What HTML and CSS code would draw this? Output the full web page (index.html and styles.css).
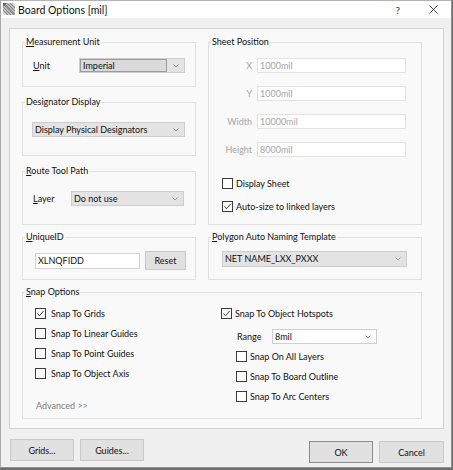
FILE: index.html
```html
<!DOCTYPE html>
<html>
<head>
<meta charset="utf-8">
<title>Board Options [mil]</title>
<link rel="stylesheet" href="styles.css">
</head>
<body>
<div class="window">
  <div class="titlebar">
    <svg class="app-icon" width="12" height="12" viewBox="0 0 12 12">
      <rect x="0" y="0" width="12" height="12" fill="#d8d8d8"/>
      <path d="M0 1 L11 12 M0 4 L8 12 M0 7 L5 12 M1 0 L12 11 M4 0 L12 8 M7 0 L12 5" stroke="#8a8a8a" stroke-width="1.2"/>
      <path d="M0 0 L4 0 L0 4 Z" fill="#6a6a6a"/>
    </svg>
    <span class="title">Board Options [mil]</span>
    <span class="help">?</span>
    <svg class="close" width="9" height="9" viewBox="0 0 9 9">
      <path d="M0.5 0.5 L8.5 8.5 M8.5 0.5 L0.5 8.5" stroke="#333" stroke-width="0.9"/>
    </svg>
  </div>

  <div class="body">
    <div class="panel">
      <div class="grid">
        <div class="col-left">
          <fieldset class="group g-unit">
            <legend><u>M</u>easurement Unit</legend>
            <div class="fs-body row">
              <span class="lbl lbl-unit"><u>U</u>nit</span>
              <div class="select focused w-unit">
                <span class="value">Imperial</span>
                <span class="arrow"><svg width="6" height="4" viewBox="0 0 6 4"><polyline points="0.5,0.5 3,3 5.5,0.5" fill="none" stroke="#888" stroke-width="0.8"/></svg></span>
              </div>
            </div>
          </fieldset>

          <fieldset class="group g-des">
            <legend>Designator Display</legend>
            <div class="fs-body row pad-des">
              <div class="select w-des">
                <span class="value">Display Physical Designators</span>
                <span class="arrow"><svg width="6" height="4" viewBox="0 0 6 4"><polyline points="0.5,0.5 3,3 5.5,0.5" fill="none" stroke="#888" stroke-width="0.8"/></svg></span>
              </div>
            </div>
          </fieldset>

          <fieldset class="group g-route">
            <legend><u>R</u>oute Tool Path</legend>
            <div class="fs-body row pad-route">
              <span class="lbl lbl-layer"><u>L</u>ayer</span>
              <div class="select w-layer">
                <span class="value">Do not use</span>
                <span class="arrow"><svg width="6" height="4" viewBox="0 0 6 4"><polyline points="0.5,0.5 3,3 5.5,0.5" fill="none" stroke="#888" stroke-width="0.8"/></svg></span>
              </div>
            </div>
          </fieldset>
        </div>

        <fieldset class="group g-sheet">
          <legend>Sheet Position</legend>
          <div class="fs-body sheet-body">
            <div class="srow"><span class="slbl">X</span><span class="input disabled w-sheet">1000mil</span></div>
            <div class="srow"><span class="slbl">Y</span><span class="input disabled w-sheet">1000mil</span></div>
            <div class="srow"><span class="slbl">Width</span><span class="input disabled w-sheet">10000mil</span></div>
            <div class="srow"><span class="slbl">Height</span><span class="input disabled w-sheet">8000mil</span></div>
            <div class="checks sheet-checks">
              <div class="check tight"><span class="box"></span><span>Display Sheet</span></div>
              <div class="check tight"><span class="box"><svg width="9" height="9" viewBox="0 0 9 9"><polyline points="1.5,4.5 3.5,6.8 7.8,1.8" fill="none" stroke="#222" stroke-width="0.9"/></svg></span><span>Auto-size to linked layers</span></div>
            </div>
          </div>
        </fieldset>

        <fieldset class="group g-uid">
          <legend><u>U</u>niqueID</legend>
          <div class="fs-body row pad-uid">
            <span class="input w-uid">XLNQFIDD</span>
            <span class="btn btn-reset">Reset</span>
          </div>
        </fieldset>

        <fieldset class="group g-poly">
          <legend><u>P</u>olygon Auto Naming Template</legend>
          <div class="fs-body row pad-poly">
            <div class="select w-poly">
              <span class="value">NET NAME_LXX_PXXX</span>
              <span class="arrow"><svg width="6" height="4" viewBox="0 0 6 4"><polyline points="0.5,0.5 3,3 5.5,0.5" fill="none" stroke="#888" stroke-width="0.8"/></svg></span>
            </div>
          </div>
        </fieldset>

        <fieldset class="group g-snap">
          <legend><u>S</u>nap Options</legend>
          <div class="fs-body snap-body">
            <div class="snap-left">
              <div class="check wide"><span class="box"><svg width="9" height="9" viewBox="0 0 9 9"><polyline points="1.5,4.5 3.5,6.8 7.8,1.8" fill="none" stroke="#222" stroke-width="0.9"/></svg></span><span>Snap To Grids</span></div>
              <div class="check wide"><span class="box"></span><span>Snap To Linear Guides</span></div>
              <div class="check wide"><span class="box"></span><span>Snap To Point Guides</span></div>
              <div class="check wide"><span class="box"></span><span>Snap To Object Axis</span></div>
              <div class="advanced">Advanced &gt;&gt;</div>
            </div>
            <div class="snap-right">
              <div class="check tight"><span class="box"><svg width="9" height="9" viewBox="0 0 9 9"><polyline points="1.5,4.5 3.5,6.8 7.8,1.8" fill="none" stroke="#222" stroke-width="0.9"/></svg></span><span>Snap To Object Hotspots</span></div>
              <div class="row range-row">
                <span class="lbl lbl-range">Range</span>
                <div class="select white w-range">
                  <span class="value">8mil</span>
                  <span class="arrow"><svg width="6" height="4" viewBox="0 0 6 4"><polyline points="0.5,0.5 3,3 5.5,0.5" fill="none" stroke="#888" stroke-width="0.8"/></svg></span>
                </div>
              </div>
              <div class="sub-checks">
                <div class="check tight"><span class="box"></span><span>Snap On All Layers</span></div>
                <div class="check tight"><span class="box"></span><span>Snap To Board Outline</span></div>
                <div class="check tight"><span class="box"></span><span>Snap To Arc Centers</span></div>
              </div>
            </div>
          </div>
        </fieldset>
      </div>
    </div>

    <div class="footer">
      <div class="btn-group">
        <span class="btn btn-foot">Grids...</span>
        <span class="btn btn-foot">Guides...</span>
      </div>
      <div class="btn-group right">
        <span class="btn btn-foot default">OK</span>
        <span class="btn btn-foot btn-cancel">Cancel</span>
      </div>
    </div>
  </div>
</div>
</body>
</html>
```

FILE: styles.css
```css
* { box-sizing: border-box; }
html, body { margin: 0; padding: 0; }
body {
  width: 453px;
  height: 470px;
  overflow: hidden;
  background: #6e6e6e;
  font-family: Lato, "Noto Sans", sans-serif;
  font-size: 9px;
  color: #111;
}
u { text-decoration: underline; text-underline-offset: 1px; }

.window {
  width: 452px;
  height: 468px;
  background: #f0f0f0;
  border: 1px solid #8f8f8f;
  border-top-color: #b4b4b4;
  border-left-color: #a8a8a8;
  display: flex;
  flex-direction: column;
}

.titlebar {
  height: 17px;
  background: #ffffff;
  display: flex;
  align-items: center;
  padding-left: 2px;
  flex: none;
}
.app-icon { flex: none; margin-top: -1px; }
.title { font-size: 10.5px; margin-left: 3px; color: #111; line-height: 14px; }
.help { margin-left: auto; font-size: 10px; color: #333; margin-right: 29px; }
.close { margin-right: 13px; }

.body { flex: 1; display: flex; flex-direction: column; }

.panel {
  margin: 10px 7px 0 8px;
  height: 401px;
  background: #f9f9f9;
  border: 1px solid #d2d2d2;
  padding: 7px 0 0 12px;
}

.grid {
  display: grid;
  grid-template-columns: 174px 214px;
  column-gap: 12px;
  row-gap: 6px;
}
.col-left { display: flex; flex-direction: column; gap: 9px; }

.group {
  margin: 0;
  padding: 0;
  min-width: 0;
  border: 1px solid #e0e0e0;
}
.group legend {
  padding: 0 1px;
  margin-left: 2px;
  line-height: 12px;
  font-size: 9px;
  color: #111;
}
.g-unit { height: 51px; }
.g-des { height: 60px; }
.g-route { height: 60px; }
.g-sheet { height: 189px; }
.g-uid { height: 49px; }
.g-poly { height: 49px; }
.g-snap { grid-column: 1 / span 2; height: 133px; }

.fs-body { padding: 10px 0 0 10px; }
.row { display: flex; align-items: center; }
.pad-des { padding: 14px 0 0 9px; }
.pad-route { padding: 14px 0 0 10px; }
.pad-uid { padding: 8px 0 0 12px; gap: 5px; }
.pad-poly { padding: 8px 0 0 13px; }

.lbl { line-height: 12px; }
.lbl-unit { width: 46px; }
.lbl-layer { width: 38px; }
.lbl-range { width: 35px; }

.select {
  height: 15px;
  background: #e3e3e3;
  border: 1px solid #cdcdcd;
  display: flex;
  align-items: stretch;
}
.select .value {
  flex: 1;
  padding-left: 2px;
  line-height: 13px;
  white-space: nowrap;
  overflow: hidden;
}
.select .arrow {
  width: 17px;
  display: flex;
  align-items: center;
  justify-content: center;
}
.select.focused .value {
  background: #dadada;
  border: 1px solid #9c9c9c;
  margin: 0;
  line-height: 11px;
}
.select.white { background: #ffffff; border-color: #cfcfcf; }

.w-unit { width: 106px; }
.w-des { width: 153px; }
.w-layer { width: 113px; }
.w-poly { width: 185px; height: 16px; }
.w-poly .value { line-height: 14px; }
.w-range { width: 105px; }

.input {
  display: block;
  height: 15px;
  background: #ffffff;
  border: 1px solid #d4d4d4;
  padding-left: 2px;
  line-height: 13px;
}
.input.disabled { color: #a6a6a6; border-color: #e2e2e2; }
.w-uid { width: 105px; height: 16px; line-height: 14px; }
.w-sheet { width: 149px; }

.btn {
  display: flex;
  align-items: center;
  justify-content: center;
  background: #e1e1e1;
  border: 1px solid #c9c9c9;
  color: #111;
}
.btn-reset { width: 41px; height: 19px; }

.sheet-body { padding: 10px 0 0 0; }
.srow { display: flex; align-items: center; height: 15px; margin-bottom: 13px; }
.srow:nth-child(4) { margin-bottom: 0; }
.slbl { width: 44px; text-align: right; padding-right: 1px; margin-right: 4px; color: #a6a6a6; }
.sheet-checks { padding: 21px 0 0 13px; display: flex; flex-direction: column; gap: 12px; }

.check { display: flex; align-items: center; height: 11px; line-height: 11px; }
.check .box {
  width: 11px;
  height: 11px;
  background: #ffffff;
  border: 1px solid #3c3c3c;
  flex: none;
  display: flex;
  align-items: center;
  justify-content: center;
}
.check.tight { gap: 3px; }
.check.wide { gap: 5px; }

.snap-body { display: flex; padding: 10px 0 0 12px; }
.snap-left { width: 186px; display: flex; flex-direction: column; gap: 9px; }
.advanced { color: #7a7a7a; margin-top: 12px; line-height: 12px; padding-left: 1px; }
.snap-right { display: flex; flex-direction: column; }
.range-row { margin: 10px 0 0 16px; }
.sub-checks { display: flex; flex-direction: column; gap: 9px; margin: 7px 0 0 15px; }

.footer {
  display: flex;
  justify-content: space-between;
  padding: 10px 7px 0 9px;
}
.btn-group { display: flex; gap: 6px; }
.btn-group.right { margin-top: 2px; }
.btn-foot { width: 64px; height: 22px; }
.btn-cancel { width: 65px; }
.btn.default { border-color: #8c8c8c; }
```
